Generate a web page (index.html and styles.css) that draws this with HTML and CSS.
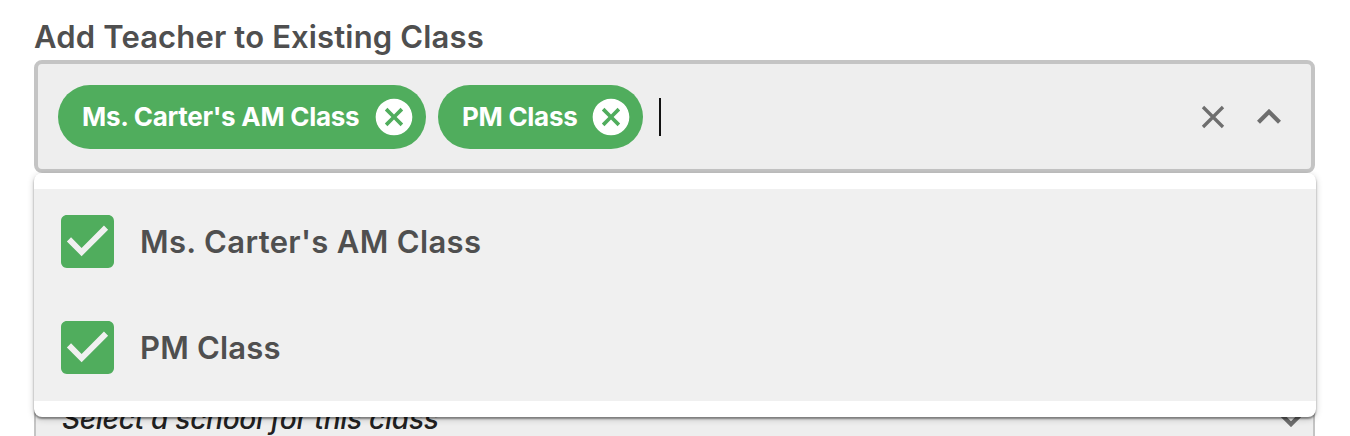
FILE: index.html
```html
<!DOCTYPE html>
<html lang="en">
<head>
    <meta charset="UTF-8">
    <meta name="viewport" content="width=device-width, initial-scale=1.0">
    <title>Add Teacher</title>
    <link rel="stylesheet" href="styles.css">
</head>
<body>

<div class="container">
    <label class="field-label">Add Teacher to Existing Class</label>

    <div class="field">
        <div class="select-box">
            <div class="chip">
                <span class="chip-text">Ms. Carter's AM Class</span>
                <svg class="chip-remove" viewBox="0 0 24 24"><path d="M12 2C6.47 2 2 6.47 2 12s4.47 10 10 10 10-4.47 10-10S17.53 2 12 2zm5 13.59L15.59 17 12 13.41 8.41 17 7 15.59 10.59 12 7 8.41 8.41 7 12 10.59 15.59 7 17 8.41 13.41 12 17 15.59z"/></svg>
            </div>
            <div class="chip chip-short">
                <span class="chip-text">PM Class</span>
                <svg class="chip-remove" viewBox="0 0 24 24"><path d="M12 2C6.47 2 2 6.47 2 12s4.47 10 10 10 10-4.47 10-10S17.53 2 12 2zm5 13.59L15.59 17 12 13.41 8.41 17 7 15.59 10.59 12 7 8.41 8.41 7 12 10.59 15.59 7 17 8.41 13.41 12 17 15.59z"/></svg>
            </div>
            <span class="caret"></span>
            <div class="select-icons">
                <svg class="icon-clear" viewBox="0 0 24 24"><path d="M2 2l20 20M22 2L2 22"/></svg>
                <svg class="icon-arrow" viewBox="0 0 24 15"><path d="M1.5 13.3L12 2.8l10.5 10.5"/></svg>
            </div>
        </div>

        <div class="dropdown">
            <div class="option">
                <svg class="checkbox" viewBox="3 3 18 18"><path d="M19 3H5c-1.11 0-2 .9-2 2v14c0 1.1.89 2 2 2h14c1.11 0 2-.9 2-2V5c0-1.1-.89-2-2-2zm-9 14l-5-5 1.41-1.41L10 14.17l7.59-7.59L19 8l-9 9z"/></svg>
                <span class="option-text">Ms. Carter's AM Class</span>
            </div>
            <div class="option">
                <svg class="checkbox" viewBox="3 3 18 18"><path d="M19 3H5c-1.11 0-2 .9-2 2v14c0 1.1.89 2 2 2h14c1.11 0 2-.9 2-2V5c0-1.1-.89-2-2-2zm-9 14l-5-5 1.41-1.41L10 14.17l7.59-7.59L19 8l-9 9z"/></svg>
                <span class="option-text option-text-short">PM Class</span>
            </div>
        </div>
    </div>

    <div class="school-select">
        <span class="placeholder">Select a school for this class</span>
        <svg class="icon-down" viewBox="0 0 24 15"><path d="M1.5 1.7L12 12.2 22.5 1.7"/></svg>
    </div>
</div>

</body>
</html>
```

FILE: styles.css
```css
* {
    box-sizing: border-box;
}
body {
    font-family: 'Inter', 'Liberation Sans', sans-serif;
    margin: 0;
    background-color: white;
    color: #4f4f4f;
}
.container {
    width: 1281px;
    margin-left: 34px;
    padding-top: 16px;
}
.field-label {
    display: block;
    height: 44px;
    line-height: 42px;
    font-size: 31px;
    font-weight: 620;
    letter-spacing: 0.15px;
    white-space: nowrap;
}
.field {
    position: relative;
}
.select-box {
    display: flex;
    align-items: center;
    gap: 12px;
    height: 113px;
    padding: 0 30px 0 20px;
    border: 4px solid #c4c4c4;
    border-radius: 8px;
    background-color: #eee;
}
.chip {
    display: flex;
    align-items: center;
    justify-content: space-between;
    width: 368px;
    height: 64px;
    padding: 0 10px 0 24px;
    border-radius: 32px;
    background-color: #50ad5d;
    color: white;
    font-size: 26px;
    font-weight: 700;
    letter-spacing: -0.28px;
    white-space: nowrap;
}
.chip-short {
    width: 205px;
}
.chip-remove {
    width: 44px;
    height: 44px;
    fill: white;
}
.caret {
    width: 2px;
    height: 38px;
    margin-left: 4px;
    background-color: #111;
}
.select-icons {
    display: flex;
    align-items: center;
    gap: 32px;
    margin-left: auto;
}
.icon-clear, .icon-arrow, .icon-down {
    width: 24px;
    fill: none;
    stroke: #6e6e6e;
}
.icon-clear {
    height: 24px;
    stroke-width: 3.3;
}
.icon-arrow, .icon-down {
    height: 15px;
    stroke-width: 4.2;
}
.dropdown {
    position: absolute;
    top: 113px;
    left: 0;
    width: 1282px;
    padding: 16px 0;
    border-radius: 8px;
    background-color: white;
    box-shadow: 0 2px 2px rgba(0, 0, 0, 0.4), 0 2px 7px rgba(0, 0, 0, 0.2);
}
.option {
    display: flex;
    align-items: center;
    gap: 26.5px;
    height: 106px;
    padding: 0 0 1px 26.5px;
    background-color: #f0f0f0;
    font-size: 31px;
    font-weight: 620;
    letter-spacing: 0.35px;
}
.option-text-short {
    letter-spacing: 0.2px;
}
.checkbox {
    width: 53px;
    height: 53px;
    fill: #50ad5d;
}
.school-select {
    display: flex;
    align-items: center;
    justify-content: space-between;
    height: 69px;
    margin-top: 194px;
    padding: 33px 10px 0 26px;
    border: 2px solid #c4c4c4;
    border-bottom: none;
    border-radius: 8px 8px 0 0;
    background-color: #eee;
}
.placeholder {
    color: #212121;
    font-size: 28px;
    font-style: italic;
    font-weight: 550;
    letter-spacing: -0.25px;
}
```
